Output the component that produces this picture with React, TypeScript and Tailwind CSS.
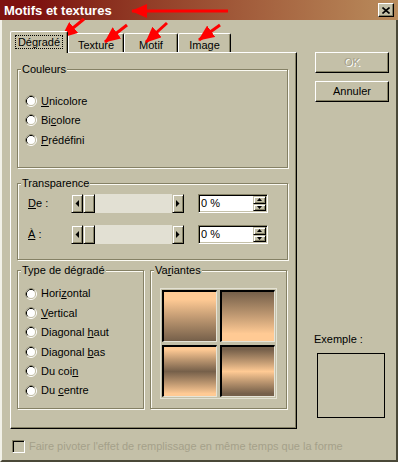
import React from "react";

function RadioDot() {
  return (
    <svg width="12" height="12" viewBox="0 0 12 12" className="shrink-0">
      <circle cx="6" cy="6" r="5.5" fill="none" stroke="#ffffff" />
      <path d="M9.89 2.11 A5.5 5.5 0 0 0 2.11 9.89" fill="none" stroke="#858165" />
      <circle cx="6" cy="6" r="4.5" fill="none" stroke="#c4c0a8" />
      <path d="M9.18 2.82 A4.5 4.5 0 0 0 2.82 9.18" fill="none" stroke="#000000" />
      <circle cx="6" cy="6" r="4" fill="#ffffff" />
    </svg>
  );
}

function Radio({ children, rowH }: { children: React.ReactNode; rowH: string }) {
  return (
    <div className={"flex items-center gap-[4px] " + rowH}>
      <RadioDot />
      <span>{children}</span>
    </div>
  );
}

function Key({ children }: { children: React.ReactNode }) {
  return <span className="underline underline-offset-[1px]">{children}</span>;
}

function ScrollArrow({ dir }: { dir: "left" | "right" }) {
  return (
    <div className="w-[12px] h-full flex items-center justify-center bg-[#c4c0a8] border border-t-[#c4c0a8] border-l-[#c4c0a8] border-r-black border-b-black shadow-[inset_1px_1px_0_#ffffff,inset_-1px_-1px_0_#858165]">
      <svg width="4" height="7" viewBox="0 0 4 7">
        {dir === "left" ? <polygon points="4,0 4,7 0.5,3.5" fill="#000" /> : <polygon points="0,0 0,7 3.5,3.5" fill="#000" />}
      </svg>
    </div>
  );
}

function ScrollBar() {
  return (
    <div className="flex w-[113px] h-[19px]">
      <ScrollArrow dir="left" />
      <div className="w-[12px] h-full bg-[#c4c0a8] border border-t-[#c4c0a8] border-l-[#c4c0a8] border-r-black border-b-black shadow-[inset_1px_1px_0_#ffffff,inset_-1px_-1px_0_#858165]" />
      <div className="flex-1 h-full bg-[#e2e0d3]" />
      <ScrollArrow dir="right" />
    </div>
  );
}

function SpinEdit() {
  return (
    <div className="flex w-[70px] h-[19px] bg-white border border-t-[#858165] border-l-[#858165] border-r-white border-b-white shadow-[inset_1px_1px_0_#000000,inset_-1px_-1px_0_#c4c0a8]">
      <span className="flex-1 pl-[2px] leading-[17px]">0 %</span>
      <div className="flex flex-col w-[14px] py-[1px] pr-[1px]">
        {["up", "down"].map((d) => (
          <div
            key={d}
            className="flex-1 flex items-center justify-center bg-[#c4c0a8] border border-t-[#c4c0a8] border-l-[#c4c0a8] border-r-black border-b-black shadow-[inset_1px_1px_0_#ffffff,inset_-1px_-1px_0_#858165]"
          >
            <svg width="5" height="3" viewBox="0 0 5 3">
              {d === "up" ? <polygon points="0,3 5,3 2.5,0" fill="#000" /> : <polygon points="0,0 5,0 2.5,3" fill="#000" />}
            </svg>
          </div>
        ))}
      </div>
    </div>
  );
}

function Button({ children, disabled }: { children: React.ReactNode; disabled?: boolean }) {
  return (
    <div
      className={
        "h-[21px] flex items-center justify-center border border-t-white border-l-white border-r-black border-b-black shadow-[inset_-1px_-1px_0_#858165] " +
        (disabled ? "text-[#a4a08a] [text-shadow:1px_1px_0_#ffffff]" : "text-black")
      }
    >
      {children}
    </div>
  );
}

const groupCls =
  "border border-[#858165] shadow-[inset_1px_1px_0_#fbfaf3,1px_1px_0_#fbfaf3] p-0 m-0 min-w-0";
const legendCls = "ml-[3px] px-[1px] leading-[13px] bg-[#c4c0a8]";

const swatches = [
  "bg-linear-to-b from-[#ffca94] from-15% to-[#76604a]",
  "bg-linear-to-b from-[#76604a] to-[#ffca94] to-85%",
  "bg-linear-to-b from-[#ffca94] from-5% via-[#76604a] to-[#ffca94] to-95%",
  "bg-linear-to-b from-[#76604a] from-5% via-[#ffca94] to-[#76604a] to-95%",
];

function Arrows() {
  const lines: [number, number, number, number][] = [
    [228, 11, 132, 11],
    [84, 19, 62, 37],
    [127, 25, 105, 42],
    [167, 23, 146, 42],
    [220, 25, 199, 40],
  ];
  return (
    <svg className="absolute inset-0 pointer-events-none" width="398" height="462">
      <defs>
        <marker id="head" markerUnits="userSpaceOnUse" markerWidth="16" markerHeight="14" refX="15" refY="7" orient="auto">
          <polygon points="0,0 16,7 0,14" fill="#ff0000" />
        </marker>
      </defs>
      {lines.map(([x1, y1, x2, y2], i) => (
        <line key={i} x1={x1} y1={y1} x2={x2} y2={y2} stroke="#ff0000" strokeWidth="3" markerEnd="url(#head)" />
      ))}
    </svg>
  );
}

export default function App() {
  return (
    <div className="relative w-[398px] h-[462px] flex flex-col overflow-hidden bg-[#c4c0a8] text-black text-[11px] font-['Liberation_Sans',Arial,sans-serif]">
      {/* barre de titre */}
      <div className="h-[20px] shrink-0 flex items-center justify-between pl-[4px] pr-[4px] bg-linear-to-r from-[#7e1210] from-10% to-[#b98c5c]">
        <span className="text-white font-bold text-[13px] leading-none">Motifs et textures</span>
        <div className="w-[16px] h-[14px] flex items-center justify-center bg-[#c4c0a8] border border-t-white border-l-white border-r-black border-b-black shadow-[inset_-1px_-1px_0_#858165]">
          <svg width="8" height="7" viewBox="0 0 8 7">
            <path d="M0.5 0.5 L7.5 6.5 M7.5 0.5 L0.5 6.5" stroke="#000" strokeWidth="1.6" />
          </svg>
        </div>
      </div>

      <div className="flex-1 flex flex-col pl-[8px] pt-[11px] border-l-[2px] border-l-[#f2f1e8] border-r-[2px] border-r-[#4a4838] border-b-[2px] border-b-[#4a4838]">
        <div className="flex">
          {/* colonne gauche */}
          <div className="w-[287px] flex flex-col">
            <div className="flex items-end h-[21px]">
              <div className="relative z-10 -mb-px w-[58px] h-[22px] flex items-start justify-center pt-[4px] bg-[#c4c0a8] border-t border-l border-r border-t-white border-l-white border-r-black rounded-t-[2px] shadow-[inset_-1px_0_0_#858165]">
                <span className="px-[2px] leading-[12px] outline outline-1 outline-dotted outline-black">Dégradé</span>
              </div>
              {[
                ["Texture", "w-[56px]"],
                ["Motif", "w-[54px]"],
                ["Image", "w-[53px]"],
              ].map(([t, w]) => (
                <div
                  key={t}
                  className={
                    w +
                    " h-[19px] flex items-start justify-center pt-[3px] border-t border-l border-r border-t-white border-l-white border-r-black rounded-t-[2px] shadow-[inset_-1px_0_0_#858165]"
                  }
                >
                  {t}
                </div>
              ))}
            </div>

            <div className="h-[377px] flex flex-col pt-[10px] pl-[6px] pr-[8px] border border-t-white border-l-white border-r-black border-b-black shadow-[inset_-1px_-1px_0_#858165]">
              <fieldset className={groupCls + " h-[105px]"}>
                <legend className={legendCls}>Couleurs</legend>
                <div className="pl-[7px] pt-[15px]">
                  <Radio rowH="h-[19.5px]">
                    <Key>U</Key>nicolore
                  </Radio>
                  <Radio rowH="h-[19.5px]">
                    Bi<Key>c</Key>olore
                  </Radio>
                  <Radio rowH="h-[19.5px]">
                    <Key>P</Key>rédéfini
                  </Radio>
                </div>
              </fieldset>

              <fieldset className={groupCls + " h-[83px] mt-[9px]"}>
                <legend className={legendCls}>Transparence</legend>
                <div className="pl-[10px] pt-[4px] flex flex-col gap-[12px]">
                  {[<><Key>D</Key>e :</>, <><Key>À</Key> :</>].map((l, i) => (
                    <div key={i} className="flex items-center h-[19px]">
                      <span className="w-[43px]">{l}</span>
                      <ScrollBar />
                      <div className="ml-[14px]">
                        <SpinEdit />
                      </div>
                    </div>
                  ))}
                </div>
              </fieldset>

              <div className="flex mt-[4px]">
                <fieldset className={groupCls + " w-[127px] h-[145px]"}>
                  <legend className={legendCls}>Type de dégradé</legend>
                  <div className="pl-[7px] pt-[7px]">
                    <Radio rowH="h-[19.4px]">
                      Hori<Key>z</Key>ontal
                    </Radio>
                    <Radio rowH="h-[19.4px]">
                      <Key>V</Key>ertical
                    </Radio>
                    <Radio rowH="h-[19.4px]">
                      Diagonal <Key>h</Key>aut
                    </Radio>
                    <Radio rowH="h-[19.4px]">
                      Diagonal <Key>b</Key>as
                    </Radio>
                    <Radio rowH="h-[19.4px]">
                      Du coi<Key>n</Key>
                    </Radio>
                    <Radio rowH="h-[19.4px]">
                      Du <Key>c</Key>entre
                    </Radio>
                  </div>
                </fieldset>
                <fieldset className={groupCls + " w-[137px] h-[145px] ml-[6px]"}>
                  <legend className={legendCls}>
                    Va<Key>r</Key>iantes
                  </legend>
                  <div className="pl-[9px] pt-[11px]">
                    <div className="w-[117px] h-[111px] p-px border border-[#e4e2d4] grid grid-cols-2 gap-[3px] place-content-start">
                      {swatches.map((s, i) => (
                        <div
                          key={i}
                          className={
                            s +
                            " w-[55px] h-[52px] border-t-2 border-l-2 border-t-black border-l-black border-r border-b border-r-[#e6e4d8] border-b-[#e6e4d8]"
                          }
                        />
                      ))}
                    </div>
                  </div>
                </fieldset>
              </div>
            </div>
          </div>

          {/* colonne droite */}
          <div className="ml-[18px] w-[74px] flex flex-col pt-[21px]">
            <Button disabled>OK</Button>
            <div className="mt-[8px]">
              <Button>Annuler</Button>
            </div>
            <span className="mt-[231px] -ml-px leading-[13px]">Exemple :</span>
            <div className="mt-[7px] ml-[2px] w-[68px] h-[65px] border border-black" />
          </div>
        </div>

        <div className="flex items-center mt-[9px] ml-[2px] gap-[4px]">
          <div className="w-[13px] h-[13px] border border-t-[#858165] border-l-[#858165] border-r-white border-b-white shadow-[inset_1px_1px_0_#000000,inset_-1px_-1px_0_#c4c0a8]" />
          <span className="text-[#a4a08a]">Faire pivoter l'effet de remplissage en même temps que la forme</span>
        </div>
      </div>

      <Arrows />
    </div>
  );
}
